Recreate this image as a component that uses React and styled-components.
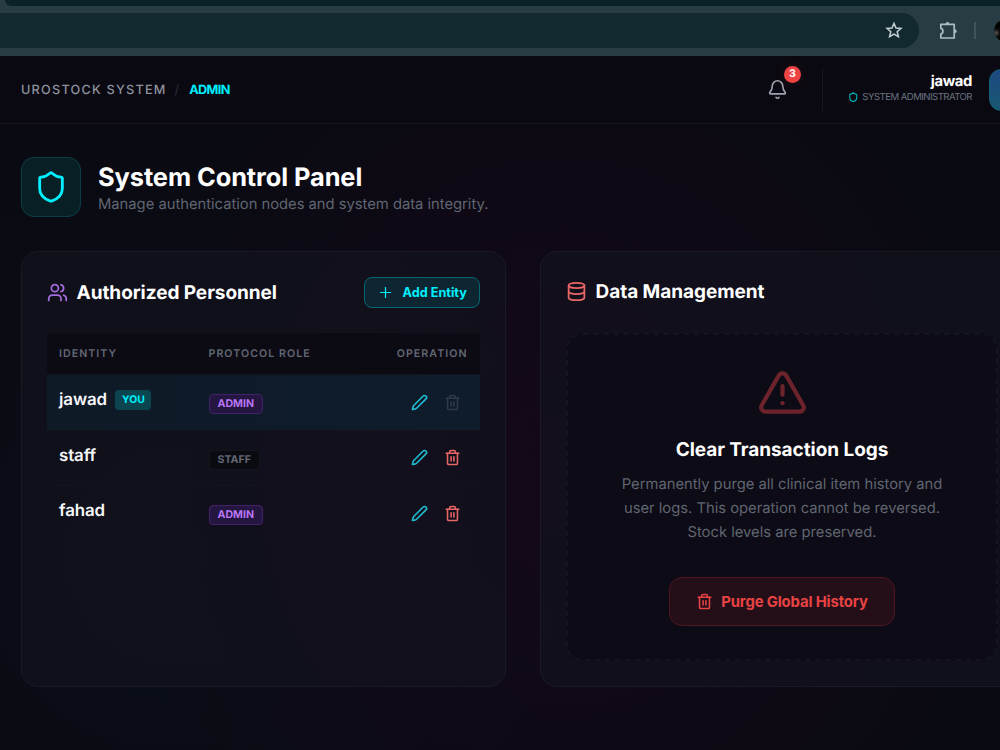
import React from "react";
import styled, { createGlobalStyle, css } from "styled-components";
import { Shield, Bell, Users, Plus, Pen, Trash2, Database, TriangleAlert } from "lucide-react";

const GlobalStyle = createGlobalStyle`
  * { box-sizing: border-box; }
  html, body { margin: 0; padding: 0; background: #09090f; }
  body { width: 1000px; height: 750px; overflow: hidden; font-family: Inter, "Liberation Sans", sans-serif; text-rendering: geometricPrecision; }
  h1, h2, h3, p { margin: 0; }
  button { font: inherit; cursor: pointer; margin: 0; }
`;

const Screen = styled.div`
  width: 1000px;
  height: 750px;
  display: flex;
  flex-direction: column;
  overflow: hidden;
`;

const TabStrip = styled.div`
  flex: none;
  height: 6px;
  background: #283d43;
`;

const ActiveTab = styled.div`
  height: 6px;
  margin-left: 5px;
  background: #0a2329;
  border-bottom-left-radius: 9px;
`;

const Toolbar = styled.div`
  flex: none;
  height: 50px;
  display: flex;
  align-items: center;
  padding-bottom: 1px;
  background: #283d43;
`;

const AddressBar = styled.div`
  flex: none;
  width: 919px;
  height: 35px;
  padding: 0 16px 1px 0;
  display: flex;
  align-items: center;
  justify-content: flex-end;
  background: #12292f;
  border-radius: 0 18px 18px 0;
`;

const ToolbarTools = styled.div`
  flex: none;
  display: flex;
  align-items: center;
  padding-left: 19px;
`;

const ToolbarDivider = styled.span`
  width: 2px;
  height: 17px;
  margin: 0 18px 0 16px;
  background: #3d565c;
`;

const BrowserAvatar = styled.span`
  flex: none;
  width: 21px;
  height: 21px;
  border-radius: 50%;
  background: radial-gradient(circle at 2px 13px, #5a5553 0, #0a0a0a 4px, #000 8px);
`;

const Workspace = styled.div`
  flex: 1;
  display: flex;
  flex-direction: column;
  min-height: 0;
  background:
    radial-gradient(ellipse 440px 480px at 560px 420px, rgba(36, 6, 34, 0.42), rgba(36, 6, 34, 0) 100%),
    radial-gradient(ellipse 420px 400px at 180px 500px, rgba(10, 22, 32, 0.4), rgba(10, 22, 32, 0) 100%),
    #0a0a12;
`;

const Header = styled.header`
  flex: none;
  width: 1031px;
  height: 68px;
  display: flex;
  align-items: center;
  padding-left: 21px;
  border-bottom: 1px solid #15141e;
  background: rgba(10, 9, 17, 0.7);
`;

const Crumbs = styled.nav`
  display: flex;
  align-items: center;
  flex: 1;
  padding-top: 2px;
  font-size: 12.7px;
  line-height: 18px;
`;

const Crumb = styled.span`
  font-weight: 500;
  letter-spacing: 1.22px;
  color: #8d929e;
`;

const Slash = styled.span`
  margin: 0 10px 0 8px;
  color: #2c2f3b;
`;

const CurrentCrumb = styled.span`
  font-weight: 700;
  letter-spacing: -0.6px;
  color: #00f0ff;
`;

const BellBox = styled.div`
  position: relative;
  display: flex;
  width: 22px;
  height: 21px;
  margin-right: 33px;
  color: #9ca3af;
`;

const Count = styled.span`
  position: absolute;
  top: -13px;
  right: -12px;
  width: 17px;
  height: 17px;
  border-radius: 50%;
  background: #ef4444;
  box-shadow: 0 0 16px rgba(239, 68, 68, 0.12);
  color: #fff;
  font-size: 10.6px;
  font-weight: 700;
  line-height: 16px;
  text-align: center;
`;

const UserBlock = styled.div`
  display: flex;
  align-items: center;
  height: 43px;
  padding-left: 25px;
  border-left: 1px solid #171722;
`;

const UserText = styled.div`
  display: flex;
  flex-direction: column;
  align-items: flex-end;
  width: 124px;
  padding-bottom: 1px;
`;

const UserName = styled.span`
  font-size: 14.8px;
  font-weight: 700;
  line-height: 17px;
  letter-spacing: -0.37px;
  color: #fff;
`;

const UserRole = styled.span`
  display: flex;
  align-items: center;
  gap: 4px;
  font-size: 9.6px;
  line-height: 16px;
  letter-spacing: -0.54px;
  white-space: nowrap;
  color: #6b7280;
  svg { color: #00b7c3; }
`;

const UserTile = styled.span`
  flex: none;
  width: 42px;
  height: 42px;
  margin-left: 17px;
  border: 1px solid #146078;
  border-radius: 12px;
  background: linear-gradient(180deg, #1d4983, #1a5870);
`;

const Title = styled.section`
  display: flex;
  align-items: center;
  gap: 17px;
  padding: 33px 0 0 21px;
`;

const TitleIcon = styled.span`
  display: grid;
  place-items: center;
  width: 60px;
  height: 60px;
  border: 1px solid #0b3f46;
  border-radius: 13px;
  background: #091f26;
  color: #00f0ff;
`;

const Heading = styled.h1`
  padding-top: 1px;
  font-size: 25.4px;
  font-weight: 700;
  line-height: 33px;
  letter-spacing: -0.08px;
  color: #fff;
`;

const Tagline = styled.p`
  font-size: 14.8px;
  line-height: 21px;
  letter-spacing: -0.03px;
  color: #5f6571;
`;

const Panels = styled.main`
  flex: none;
  display: grid;
  grid-template-columns: 485px 485px;
  gap: 34px;
  padding: 34px 0 0 21px;
`;

const Panel = styled.section`
  height: 436px;
  padding: 25px;
  border: 1px solid #1a1a26;
  border-radius: 17px;
  background: rgba(19, 19, 30, 0.7);
`;

const PanelHead = styled.div`
  display: flex;
  align-items: center;
  justify-content: space-between;
  height: 31px;
  padding-bottom: ${(p) => p.$lift || 0}px;
`;

const PanelTitle = styled.h2`
  display: flex;
  align-items: center;
  gap: 8.5px;
  font-size: 19px;
  font-weight: 700;
  line-height: 28px;
  letter-spacing: -0.05px;
  color: #fff;
  svg { color: ${(p) => p.$tint}; }
`;

const AddButton = styled.button`
  display: flex;
  align-items: center;
  gap: 8.5px;
  width: 116px;
  height: 31px;
  padding: 0 0 0 12px;
  border: 1px solid #046872;
  border-radius: 8px;
  background: #0e2631;
  color: #00f0ff;
  font-size: 12.7px;
  font-weight: 700;
  white-space: nowrap;
`;

const Table = styled.div`
  margin-top: 25px;
`;

const Row = styled.div`
  display: grid;
  grid-template-columns: 149.5px 1fr 88px;
  align-items: center;
  height: ${(p) => (p.$last ? 55 : 55.5)}px;
  padding: 0 0 0 12px;
  border-bottom: 1px solid ${(p) => (p.$last ? "transparent" : "#13131d")};
  ${(p) => p.$self && css`background: linear-gradient(90deg, #0e1a26, #0f1c2b);`}
`;

const HeadRow = styled(Row)`
  height: 42px;
  background: #0c0b14;
  color: #626774;
  font-size: 10.6px;
  font-weight: 600;
  letter-spacing: 1.06px;
`;

const HeadCell = styled.span`
  white-space: nowrap;
  justify-self: ${(p) => (p.$end ? "end" : "start")};
  margin-right: ${(p) => (p.$end ? 12.5 : 0)}px;
`;

const Identity = styled.div`
  display: flex;
  align-items: center;
  gap: 8.5px;
  padding-bottom: 4px;
  font-size: 16.9px;
  font-weight: 600;
  line-height: 24px;
  letter-spacing: -0.12px;
  color: #f6f7f9;
`;

const YouTag = styled.span`
  width: 36px;
  height: 20px;
  border-radius: 4px;
  background: #0b4650;
  color: #00f0ff;
  font-size: 10.4px;
  font-weight: 700;
  line-height: 19px;
  letter-spacing: 0;
  text-align: center;
`;

const tones = {
  admin: css`
    background: #251541;
    border-color: #42216a;
    color: #b877f5;
  `,
  staff: css`
    background: #0a0b11;
    border-color: #15161d;
    color: #626773;
  `,
};

const RoleTag = styled.span`
  justify-self: start;
  display: block;
  height: 20px;
  margin-top: 4px;
  padding: 0 8px;
  border: 1px solid;
  border-radius: 4px;
  font-size: 10.6px;
  font-weight: 700;
  line-height: 18.5px;
  ${(p) => tones[p.$tone]}
`;

const Actions = styled.div`
  display: flex;
  gap: 16.5px;
  padding-left: 18.5px;
`;

const IconButton = styled.button`
  display: flex;
  padding: 0;
  border: 0;
  background: none;
  color: ${(p) => p.$color};
`;

const DangerZone = styled.div`
  display: flex;
  flex-direction: column;
  align-items: center;
  width: 432px;
  height: 328px;
  margin-top: 25px;
  padding-top: 32px;
  border: 2px dashed #14141e;
  border-radius: 17px;
  background: #0d0b15;
  svg { flex: none; }
`;

const DangerTitle = styled.h3`
  margin-top: 17px;
  font-size: 19px;
  font-weight: 700;
  line-height: 30px;
  letter-spacing: -0.06px;
  color: #fff;
`;

const DangerText = styled.p`
  width: 340px;
  margin-top: 7px;
  font-size: 14.8px;
  line-height: 24px;
  letter-spacing: -0.02px;
  text-align: center;
  color: #5f6571;
`;

const PurgeButton = styled.button`
  display: flex;
  align-items: center;
  justify-content: center;
  gap: 8px;
  width: 226px;
  height: 49px;
  margin-top: 33px;
  padding-bottom: 1px;
  border: 1px solid #501620;
  border-radius: 13px;
  background: #240f19;
  color: #e84343;
  font-size: 14.8px;
  font-weight: 700;
  letter-spacing: -0.12px;
`;

const people = [
  { name: "jawad", role: "admin", self: true },
  { name: "staff", role: "staff" },
  { name: "fahad", role: "admin" },
];

const StarIcon = () => (
  <svg width="18" height="18" viewBox="0 0 18 18" fill="none" stroke="#c3cfd2" strokeWidth="1.5">
    <path d="M9 2.4l2 4.6 5 .4-3.8 3.3 1.2 4.9L9 13l-4.4 2.6 1.2-4.9L2 7.4l5-.4z" />
  </svg>
);

const ExtensionIcon = () => (
  <svg width="20" height="20" viewBox="0 0 20 20" fill="none" stroke="#a9bdc2" strokeWidth="1.7" strokeLinejoin="round">
    <path d="M2.8 3.4h13.4v13.6H2.8v-4c2.8-.4 2.8-5.2 0-5.6z" />
    <path d="M7.6 3a1.9 1.9 0 0 1 3.8 0zM16.8 8.3a1.9 1.9 0 0 1 0 3.8z" fill="#a9bdc2" stroke="none" />
  </svg>
);

export default function App() {
  return (
    <Screen>
      <GlobalStyle />
      <TabStrip><ActiveTab /></TabStrip>
      <Toolbar>
        <AddressBar><StarIcon /></AddressBar>
        <ToolbarTools>
          <ExtensionIcon />
          <ToolbarDivider />
          <BrowserAvatar />
        </ToolbarTools>
      </Toolbar>
      <Workspace>
        <Header>
          <Crumbs>
            <Crumb>UROSTOCK SYSTEM</Crumb>
            <Slash>/</Slash>
            <CurrentCrumb>ADMIN</CurrentCrumb>
          </Crumbs>
          <BellBox>
            <Bell size={21} strokeWidth={1.9} />
            <Count>3</Count>
          </BellBox>
          <UserBlock>
            <UserText>
              <UserName>jawad</UserName>
              <UserRole><Shield size={10.5} strokeWidth={2.4} />SYSTEM ADMINISTRATOR</UserRole>
            </UserText>
            <UserTile />
          </UserBlock>
        </Header>
        <Title>
          <TitleIcon><Shield size={34} /></TitleIcon>
          <div>
            <Heading>System Control Panel</Heading>
            <Tagline>Manage authentication nodes and system data integrity.</Tagline>
          </div>
        </Title>
        <Panels>
          <Panel>
            <PanelHead>
              <PanelTitle $tint="#a56be0"><Users size={21} />Authorized Personnel</PanelTitle>
              <AddButton><Plus size={17} strokeWidth={1.7} />Add Entity</AddButton>
            </PanelHead>
            <Table>
              <HeadRow>
                <HeadCell>IDENTITY</HeadCell>
                <HeadCell>PROTOCOL ROLE</HeadCell>
                <HeadCell $end>OPERATION</HeadCell>
              </HeadRow>
              {people.map((p, i) => (
                <Row key={p.name} $self={p.self} $last={i === people.length - 1}>
                  <Identity>{p.name}{p.self && <YouTag>YOU</YouTag>}</Identity>
                  <RoleTag $tone={p.role}>{p.role.toUpperCase()}</RoleTag>
                  <Actions>
                    <IconButton $color="#20bed6"><Pen size={17} strokeWidth={2.2} /></IconButton>
                    <IconButton $color={p.self ? "#303946" : "#e86666"}><Trash2 size={17} strokeWidth={2.2} /></IconButton>
                  </Actions>
                </Row>
              ))}
            </Table>
          </Panel>
          <Panel>
            <PanelHead $lift={2}>
              <PanelTitle $tint="#e86666"><Database size={21} />Data Management</PanelTitle>
            </PanelHead>
            <DangerZone>
              <TriangleAlert size={51} color="#6c232b" />
              <DangerTitle>Clear Transaction Logs</DangerTitle>
              <DangerText>Permanently purge all clinical item history and user logs. This operation cannot be reversed. Stock levels are preserved.</DangerText>
              <PurgeButton><Trash2 size={17} strokeWidth={2.2} />Purge Global History</PurgeButton>
            </DangerZone>
          </Panel>
        </Panels>
      </Workspace>
    </Screen>
  );
}
